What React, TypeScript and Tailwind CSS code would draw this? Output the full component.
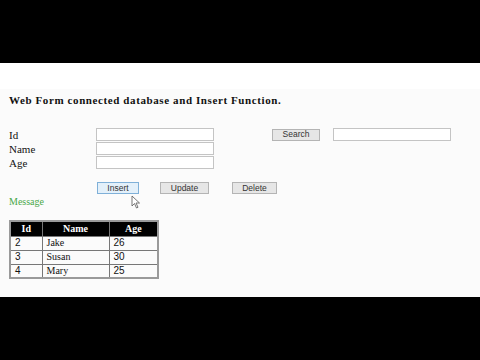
import React from 'react';

// フォームの表示用データ
const rows = [
  { id: 2, name: 'Jake', age: 26 },
  { id: 3, name: 'Susan', age: 30 },
  { id: 4, name: 'Mary', age: 25 },
];

const serif = "font-['Liberation_Serif',serif]";
const sans = "font-['Liberation_Sans',Arial,sans-serif]";

function TextBox({ className = '' }: { className?: string }) {
  return <div className={`h-[13px] w-[118px] border border-[#c4c4c4] bg-white ${className}`} />;
}

function Btn({ label, active, className = '' }: { label: string; active?: boolean; className?: string }) {
  return (
    <div
      className={`flex h-[12px] items-center justify-center border text-[8.5px] leading-none text-[#333] ${sans} ${
        active ? 'border-[#7fb0d8] bg-[#e3f0fa]' : 'border-[#b4b4b4] bg-[#e6e6e6]'
      } ${className}`}
    >
      {label}
    </div>
  );
}

export default function App() {
  return (
    <div className="flex h-[360px] w-[480px] flex-col bg-black">
      <div className="h-[63px] shrink-0 bg-black" />
      <div className={`h-[234px] shrink-0 bg-white ${serif} text-[#111]`}>
        <div className="h-[26px]" />
        <div className="h-[208px] bg-[#fbfbfb] pl-[9px]">
          {/* タイトル */}
          <div className="pt-[4px] text-[11px] font-bold leading-[14px] tracking-[0.6px]">
            Web Form connected database and Insert Function.
          </div>

          {/* 入力フォーム */}
          <div className="mt-[21px] flex flex-col gap-[1px] text-[11px] leading-[12px]">
            <div className="flex items-center">
              <span className="w-[87px]">Id</span>
              <TextBox />
              <Btn label="Search" className="ml-[58px] w-[48px]" />
              <TextBox className="ml-[13px]" />
            </div>
            <div className="flex items-center">
              <span className="w-[87px]">Name</span>
              <TextBox />
            </div>
            <div className="flex items-center">
              <span className="w-[87px]">Age</span>
              <TextBox />
            </div>
          </div>

          {/* ボタン */}
          <div className="relative mt-[13px] flex pl-[88px]">
            <Btn label="Insert" active className="w-[42px]" />
            <Btn label="Update" className="ml-[21px] w-[49px]" />
            <Btn label="Delete" className="ml-[23px] w-[45px]" />
            <svg className="absolute left-[122px] top-[13px]" width="12" height="14" viewBox="0 0 12 14">
              <path d="M1 1 L1 11 L3.5 8.5 L5.5 13 L7 12.3 L5 8 L8.5 8 Z" fill="white" stroke="#555" strokeWidth="0.8" />
            </svg>
          </div>

          <div className="mt-[2px] text-[10px] leading-[12px] text-[#4aa84a]">Message</div>

          {/* テーブル */}
          <table className="mt-[12px] border-collapse border-2 border-[#9a9a9a] text-[10px] leading-[12px]">
            <thead>
              <tr className="bg-black text-white">
                <th className="h-[15px] w-[32px] border border-[#777] text-center font-bold">Id</th>
                <th className="w-[67px] border border-[#777] text-center font-bold">Name</th>
                <th className="w-[49px] border border-[#777] text-center font-bold">Age</th>
              </tr>
            </thead>
            <tbody>
              {rows.map((r) => (
                <tr key={r.id}>
                  <td className={`h-[14px] border border-[#777] pl-[4px] ${sans}`}>{r.id}</td>
                  <td className="border border-[#777] pl-[4px]">{r.name}</td>
                  <td className={`border border-[#777] pl-[4px] ${sans}`}>{r.age}</td>
                </tr>
              ))}
            </tbody>
          </table>
        </div>
      </div>
      <div className="flex-1 bg-black" />
    </div>
  );
}
